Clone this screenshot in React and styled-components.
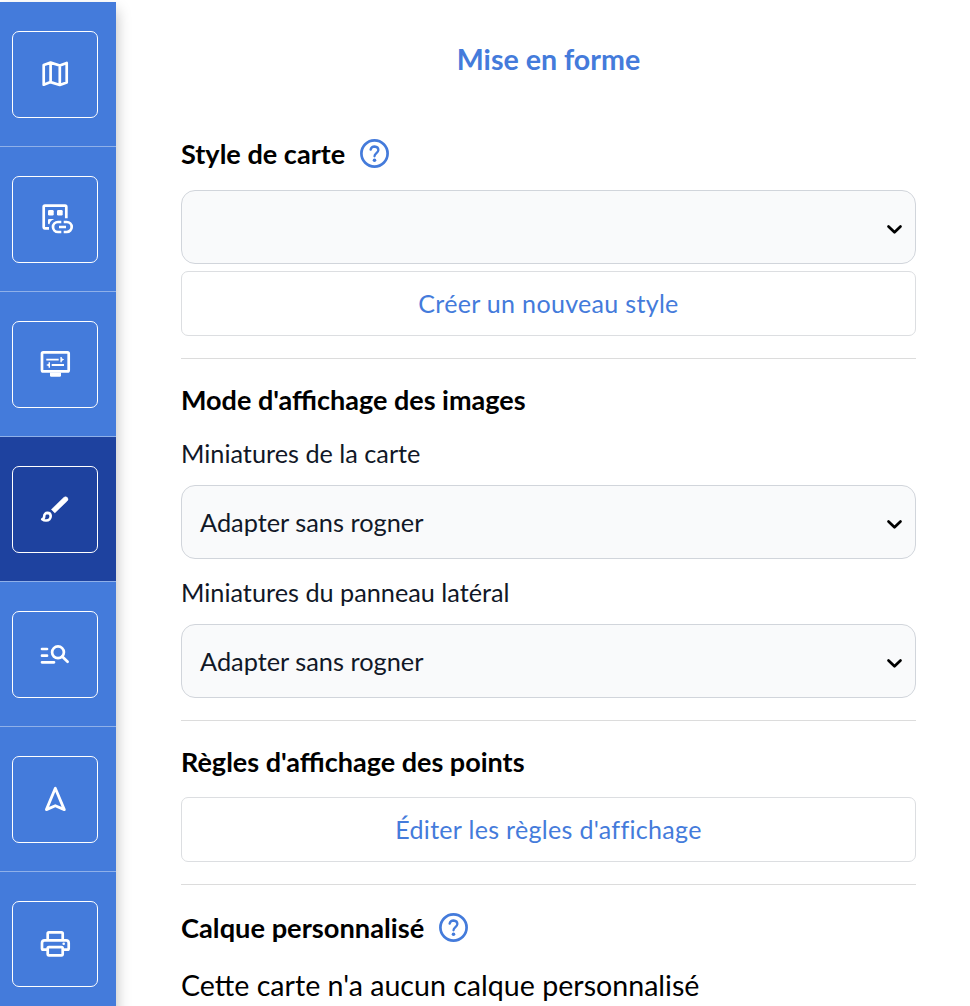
import React from 'react';
import styled, { createGlobalStyle } from 'styled-components';

const BLUE = '#447bdb';

const GlobalStyle = createGlobalStyle`
  * {
    box-sizing: border-box;
  }

  body {
    margin: 0;
    background-color: #fff;
    font-family: Lato, "Liberation Sans", sans-serif;
    color: #000;
    overflow: hidden;
  }
`;

const Page = styled.div`
  display: flex;
  height: 1006px;
  padding-top: 2px;
  overflow: hidden;
`;

const Sidebar = styled.nav`
  flex: none;
  width: 116px;
  height: 1100px;
  background-color: ${BLUE};
  box-shadow: 0 8px 14px rgba(0, 0, 0, 0.28);
`;

const IconButton = styled.button`
  display: flex;
  align-items: flex-start;
  justify-content: center;
  width: 86px;
  height: 87px;
  padding: 24px 0 0;
  border: 1px solid #fff;
  border-radius: 7px;
  background: none;
  color: #fff;
  cursor: pointer;
`;

const SidebarItem = styled.div`
  height: 145px;
  padding: 29px 0 0 12px;
  border-bottom: 1px solid #8fb0e9;
  background-color: ${(props) => (props.$active ? '#1e429f' : 'transparent')};

  &:last-child ${IconButton} {
    height: 86px;
  }
`;

const Glyph = styled.svg`
  width: 36px;
  height: 37px;
  overflow: visible;
  fill: none;
  stroke: currentColor;
  stroke-width: 2.7;
  stroke-linejoin: round;
`;

const Main = styled.main`
  flex: 1;
  display: flex;
  flex-direction: column;
  padding: 38px 54px 0 65px;
`;

const Title = styled.h1`
  margin: 0;
  font-size: 28.6px;
  line-height: 38px;
  font-weight: 700;
  text-align: center;
  color: ${BLUE};
`;

const Section = styled.section`
  display: flex;
  flex-direction: column;
  padding-top: ${(props) => props.$top}px;
  padding-bottom: 22px;
  border-bottom: 1px solid #dcdcdc;
`;

const Heading = styled.h2`
  display: flex;
  align-items: center;
  gap: 13.5px;
  height: 36px;
  margin: 0 0 ${(props) => props.$gap}px;
  font-size: ${(props) => props.$size || 27}px;
  font-weight: 700;
  white-space: nowrap;
`;

const HelpIcon = styled.svg`
  width: 31px;
  height: 31px;
  fill: none;
  stroke: ${BLUE};
  stroke-width: 2.7;
  stroke-linecap: round;
`;

const Label = styled.label`
  height: 32px;
  margin-bottom: 16px;
  font-size: 25.25px;
  line-height: 32px;
  color: #111827;
`;

const Select = styled.div`
  display: flex;
  align-items: center;
  justify-content: space-between;
  height: 74px;
  margin-bottom: ${(props) => props.$gap || 0}px;
  padding: 0 12px 0 18px;
  border: 1px solid #d1d5db;
  border-radius: 14px;
  background-color: #f9fafb;
  font-size: 25.35px;
  color: #111827;
`;

const Chevron = styled.svg`
  width: 17px;
  height: 11px;
  margin: 4px 0 0 auto;
  fill: none;
  stroke: #000;
  stroke-width: 2.7;
  stroke-linecap: round;
  stroke-linejoin: round;
`;

const ActionButton = styled.button`
  height: 65px;
  padding: 0 0 2px;
  border: 1px solid #dcdee1;
  border-radius: 7px;
  background-color: #fff;
  font-family: inherit;
  font-size: 25.05px;
  letter-spacing: 0.3px;
  color: ${BLUE};
  cursor: pointer;
`;

const Message = styled.p`
  margin: 0;
  font-size: 28.6px;
  line-height: 36px;
`;

const icons = [
  {
    id: 'map',
    label: 'Carte',
    drawing: (
      <path d="M6.7 9 13.6 6.6 22.8 9.5 29.7 6.9V26.4L22.8 29 13.6 26.1 6.7 28.7ZM13.6 6.6V26M22.8 9.5V29" />
    ),
  },
  {
    id: 'data',
    label: 'Données',
    drawing: (
      <>
        <path d="M12 27.3H7.9Q6.7 27.3 6.7 26.1V5.9Q6.7 4.7 7.9 4.7H28.1Q29.3 4.7 29.3 5.9V17.2" />
        <path d="M24.3 21H21a5 5 0 0 0 0 10h3.3M26.7 21h3a5 5 0 0 1 0 10h-3M22 26h7" />
        <g fill="currentColor" stroke="none">
          <rect x="11" y="9" width="5.7" height="5.4" rx="1.2" />
          <rect x="20" y="9" width="5.7" height="5.4" rx="1.2" />
          <path d="M12 18h5.2q-4 1.6-4.7 5.3H12q-1 0-1-1V19q0-1 1-1Z" />
        </g>
      </>
    ),
  },
  {
    id: 'display',
    label: 'Affichage',
    drawing: (
      <>
        <rect x="5" y="6.4" width="26.7" height="19" rx="1.2" />
        <path d="M9.3 13.6H21.7M14.7 19H27" strokeWidth="1.9" />
        <g fill="currentColor" stroke="none">
          <path d="M13 26.5H24v3q0 1.2-1.2 1.2H14.2q-1.2 0-1.2-1.2Z" />
          <path d="M23.4 11h1.4v1.3l2.4 1.3-2.4 1.3v1.4h-1.4ZM13 16.3h-1.4v1.4L9.2 19l2.4 1.3v1.4H13Z" />
        </g>
      </>
    ),
  },
  {
    id: 'style',
    label: 'Mise en forme',
    drawing: (
      <>
        <path
          d="M14.4 18.4 26.8 6.4Q28.7 5 30.3 6.5 31.7 8.2 30.2 10L17.8 21.9Z"
          fill="currentColor"
          strokeWidth="0.5"
        />
        <path
          d="M5.2 28.2q2-.7 2-3a3.2 3.2 0 0 1 3.2-3.3q3.1.1 3.3 3c0 2.7-1.9 4.6-4.6 4.6-1.6 0-2.9-.5-3.9-1.3Z"
          strokeWidth="2.6"
        />
      </>
    ),
  },
  {
    id: 'search',
    label: 'Recherche',
    drawing: (
      <>
        <path d="M5 13h5M5 19.7h5M5 26.3h12" strokeLinecap="round" />
        <circle cx="21" cy="16.3" r="5.9" />
        <path d="m25.2 20.5 5.4 5.2" strokeLinecap="round" />
      </>
    ),
  },
  {
    id: 'navigation',
    label: 'Navigation',
    drawing: <path d="M18.3 7.2 9.4 28.6 18.3 24.7 27.3 28.6Z" strokeWidth="2.8" />,
  },
  {
    id: 'print',
    label: 'Imprimer',
    drawing: (
      <>
        <path d="M10.7 14V7.6q0-1.2 1.2-1.2h12.6q1.2 0 1.2 1.2V14" />
        <path d="M10.7 23.7H6.2Q5 23.7 5 22.5V17q0-2.7 2.7-2.7H29q2.7 0 2.7 2.7v5.5q0 1.2-1.2 1.2H25.7" />
        <rect x="10.7" y="21.2" width="15" height="8.1" rx="1.2" />
        <circle cx="26.7" cy="17.8" r="1.3" fill="currentColor" stroke="none" />
      </>
    ),
  },
];

const Help = () => (
  <HelpIcon viewBox="0 0 31 31">
    <circle cx="15.5" cy="15.5" r="13.1" />
    <path d="M11.6 11.6Q12.4 8.5 15.6 8.5 19.3 8.7 19.4 12 19.3 13.5 17.4 15.1 15.5 16.7 15.5 18.3" strokeWidth="2.3" />
    <circle cx="15.5" cy="22.3" r="1.8" fill={BLUE} stroke="none" />
  </HelpIcon>
);

const Dropdown = ({ value, gap }) => (
  <Select $gap={gap}>
    {value}
    <Chevron viewBox="0 0 17 11">
      <path d="M2.5 2.5 8.5 8.3 14.5 2.5" />
    </Chevron>
  </Select>
);

const App = () => (
  <>
    <GlobalStyle />
    <Page>
      <Sidebar>
        {icons.map((icon) => (
          <SidebarItem key={icon.id} $active={icon.id === 'style'}>
            <IconButton aria-label={icon.label}>
              <Glyph viewBox="0 0 36 37">{icon.drawing}</Glyph>
            </IconButton>
          </SidebarItem>
        ))}
      </Sidebar>
      <Main>
        <Title>Mise en forme</Title>
        <Section $top={57}>
          <Heading $gap={19} $size={27.1}>
            Style de carte
            <Help />
          </Heading>
          <Dropdown gap={7} />
          <ActionButton>Créer un nouveau style</ActionButton>
        </Section>
        <Section $top={22}>
          <Heading $gap={20}>Mode d'affichage des images</Heading>
          <Label>Miniatures de la carte</Label>
          <Dropdown value="Adapter sans rogner" gap={17} />
          <Label>Miniatures du panneau latéral</Label>
          <Dropdown value="Adapter sans rogner" />
        </Section>
        <Section $top={22}>
          <Heading $gap={18}>Règles d'affichage des points</Heading>
          <ActionButton>Éditer les règles d'affichage</ActionButton>
        </Section>
        <Section $top={24}>
          <Heading $gap={22} $size={27.25}>
            Calque personnalisé
            <Help />
          </Heading>
          <Message>Cette carte n'a aucun calque personnalisé</Message>
        </Section>
      </Main>
    </Page>
  </>
);

export default App;
